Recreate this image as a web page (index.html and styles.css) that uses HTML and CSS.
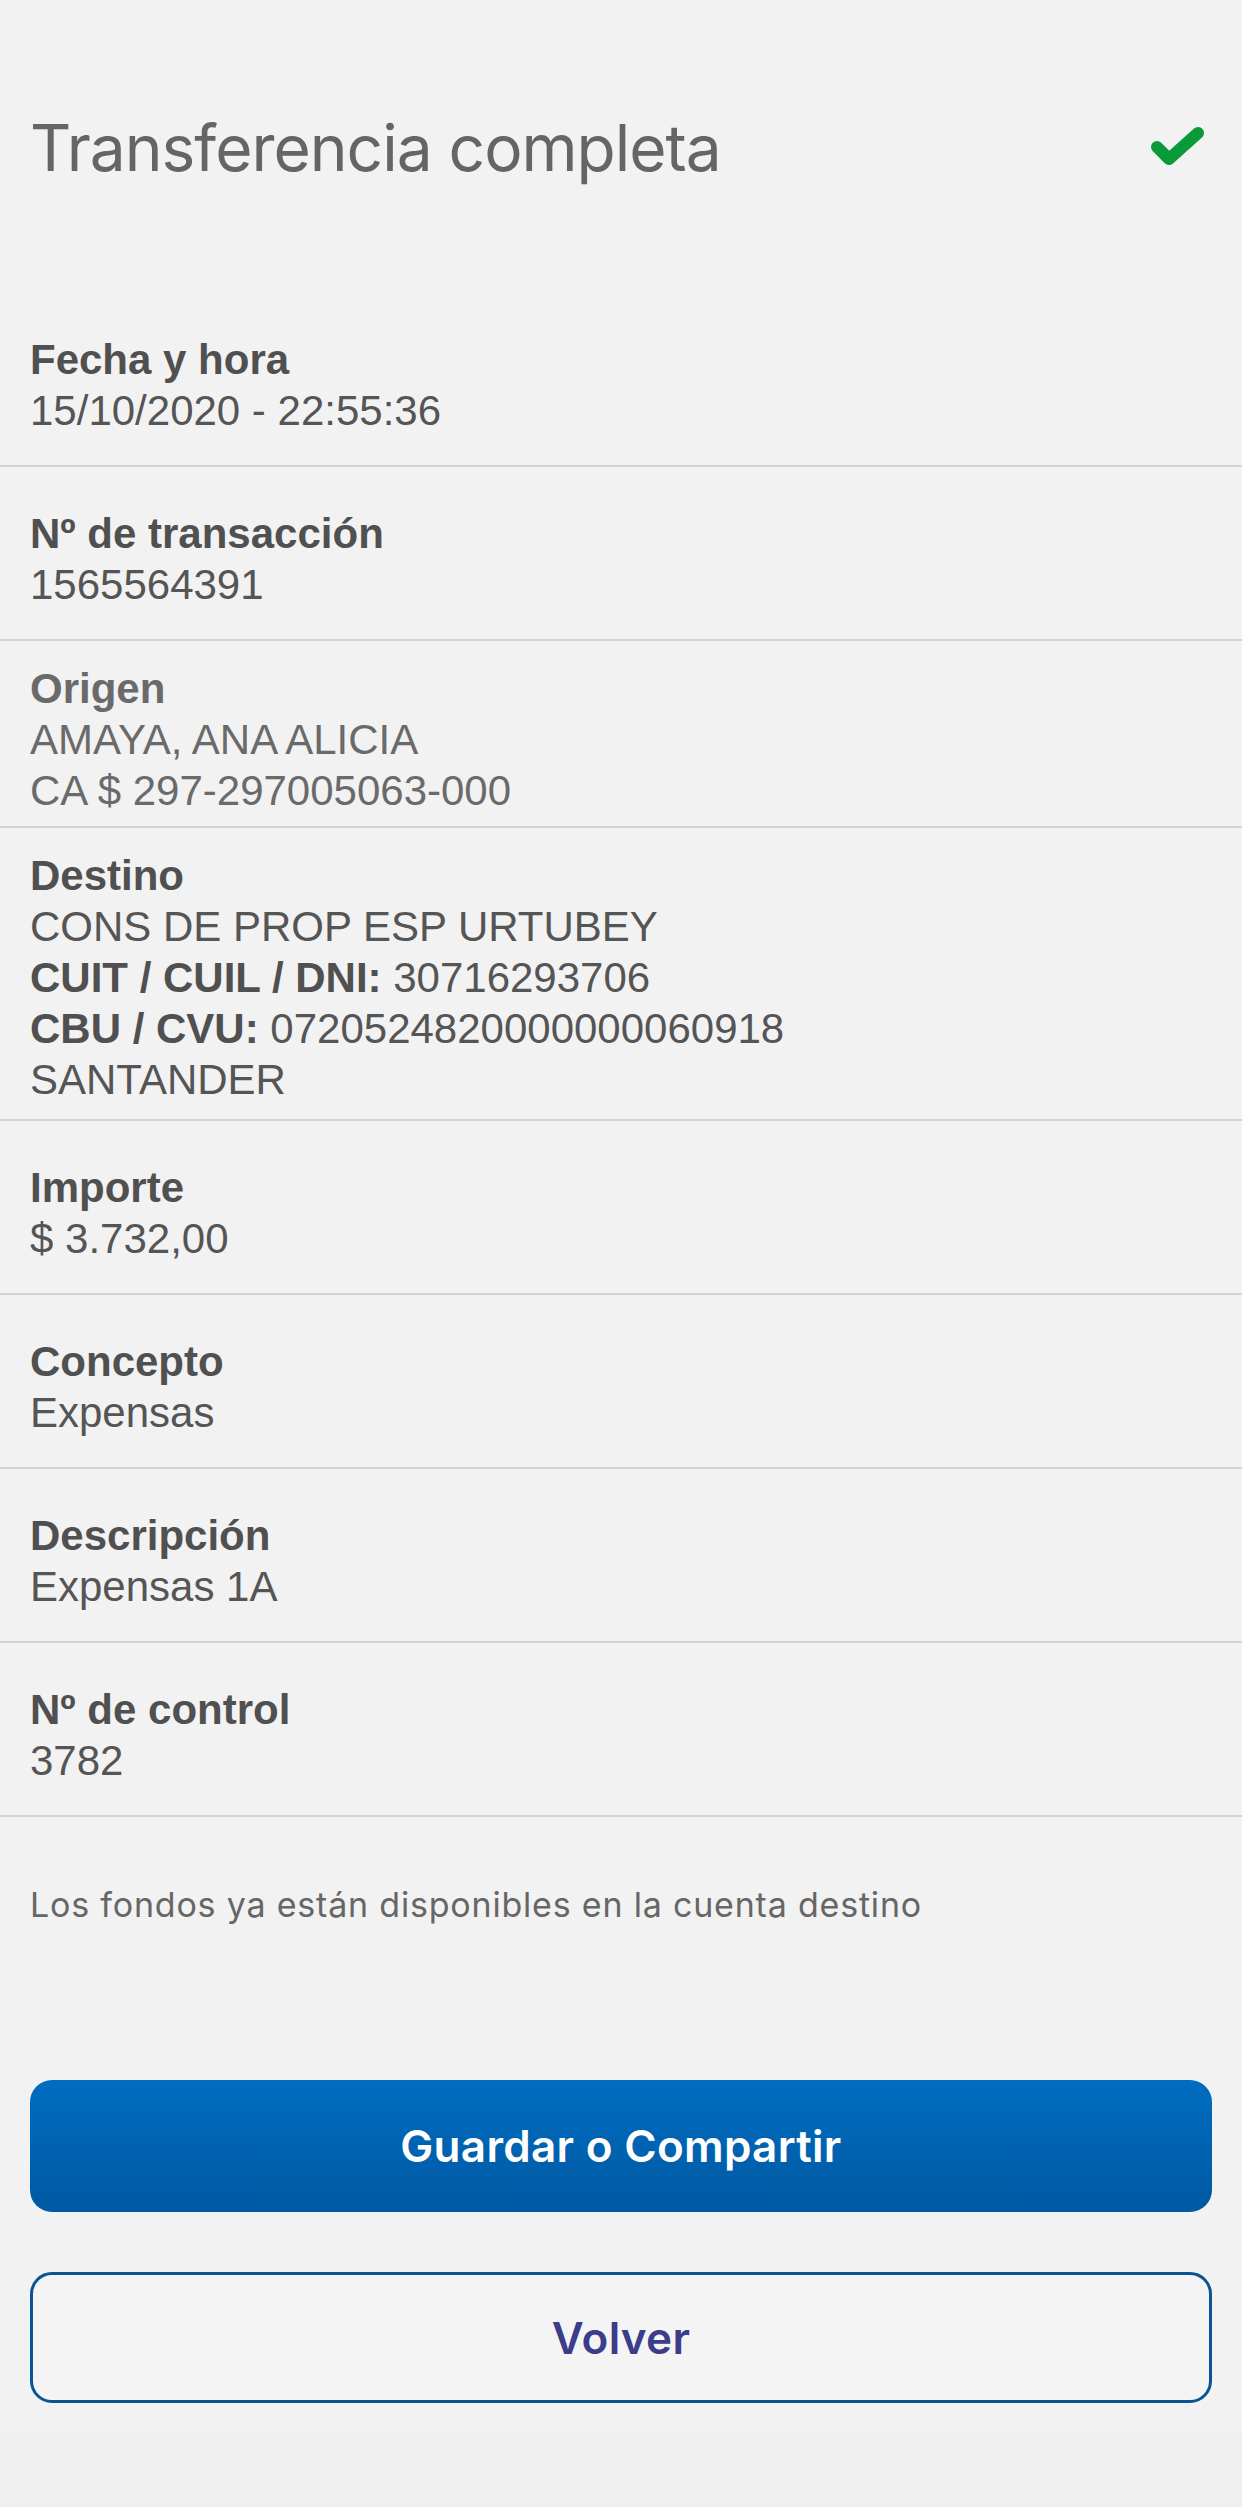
FILE: index.html
```html
<!DOCTYPE html>
<html lang="es">
<head>
<meta charset="utf-8">
<title>Transferencia completa</title>
<link rel="stylesheet" href="styles.css">
</head>
<body>
<div class="screen">
  <header class="header">
    <h1 class="title">Transferencia completa</h1>
    <svg class="check" viewBox="0 0 60 45" width="60" height="45" aria-hidden="true">
      <path d="M10 22 L22 34 L51 8" fill="none" stroke="#0a9a3a" stroke-width="12" stroke-linecap="round" stroke-linejoin="round"/>
    </svg>
  </header>

  <section class="details">
    <div class="row">
      <div class="label">Fecha y hora</div>
      <div class="value">15/10/2020 - 22:55:36</div>
    </div>
    <div class="row">
      <div class="label">Nº de transacción</div>
      <div class="value">1565564391</div>
    </div>
    <div class="row row-muted">
      <div class="label">Origen</div>
      <div class="value">AMAYA, ANA ALICIA</div>
      <div class="value">CA $ 297-297005063-000</div>
    </div>
    <div class="row row-tall">
      <div class="label">Destino</div>
      <div class="value">CONS DE PROP ESP URTUBEY</div>
      <div class="value"><b>CUIT / CUIL / DNI:</b> 30716293706</div>
      <div class="value"><b>CBU / CVU:</b> 0720524820000000060918</div>
      <div class="value">SANTANDER</div>
    </div>
    <div class="row">
      <div class="label">Importe</div>
      <div class="value">$ 3.732,00</div>
    </div>
    <div class="row">
      <div class="label">Concepto</div>
      <div class="value">Expensas</div>
    </div>
    <div class="row">
      <div class="label">Descripción</div>
      <div class="value">Expensas 1A</div>
    </div>
    <div class="row">
      <div class="label">Nº de control</div>
      <div class="value">3782</div>
    </div>
  </section>

  <p class="note">Los fondos ya están disponibles en la cuenta destino</p>

  <div class="actions">
    <button class="btn btn-primary" type="button">Guardar o Compartir</button>
    <button class="btn btn-outline" type="button">Volver</button>
  </div>
</div>
<div class="bottom-strip"></div>
</body>
</html>
```

FILE: styles.css
```css
html, body {
  margin: 0;
  padding: 0;
}

body {
  background: #efefef;
  font-family: "Liberation Sans", Arial, sans-serif;
  color: #505050;
}

.screen {
  background: #f2f2f2;
  height: 2433px;
  box-sizing: border-box;
}

.header {
  height: 293px;
  box-sizing: border-box;
  padding: 108px 35px 0 30px;
  display: flex;
  align-items: flex-start;
  justify-content: space-between;
}

.title {
  margin: 0;
  font-family: Inter, "Liberation Sans", sans-serif;
  font-weight: 400;
  font-size: 64px;
  line-height: 80px;
  letter-spacing: -1px;
  color: #656565;
}

.check {
  display: block;
  margin-top: 17px;
}

.details {
  display: flex;
  flex-direction: column;
}

.row {
  min-height: 174px;
  box-sizing: border-box;
  padding: 22px 30px 10px;
  border-bottom: 2px solid #d2d2d2;
  display: flex;
  flex-direction: column;
  justify-content: center;
}

.row-tall {
  padding-bottom: 14px;
}

.label {
  font-weight: 700;
  font-size: 42px;
  line-height: 51px;
  color: #505050;
}

.value {
  font-size: 42px;
  line-height: 51px;
  color: #555555;
}

.value b {
  font-weight: 700;
  color: #505050;
}

.row-muted .label,
.row-muted .value {
  color: #6a6a6a;
}

.note {
  margin: 68px 30px 0;
  font-family: Inter, "Liberation Sans", sans-serif;
  font-size: 34px;
  line-height: 40px;
  letter-spacing: 0.8px;
  color: #666666;
}

.actions {
  margin: 155px 30px 0;
  display: flex;
  flex-direction: column;
  gap: 60px;
}

.btn {
  display: block;
  width: 100%;
  margin: 0;
  border-radius: 22px;
  font-family: Inter, "Liberation Sans", sans-serif;
  font-weight: 600;
  font-size: 44px;
  letter-spacing: 0.3px;
  cursor: pointer;
}

.btn-primary {
  height: 132px;
  border: none;
  background: linear-gradient(to bottom, #006dc1, #0059a2);
  color: #ffffff;
}

.btn-outline {
  height: 131px;
  border: 3px solid #0a5494;
  background: #f4f4f4;
  color: #3b3c8a;
}

.bottom-strip {
  height: 74px;
  background: #efefef;
}
```
